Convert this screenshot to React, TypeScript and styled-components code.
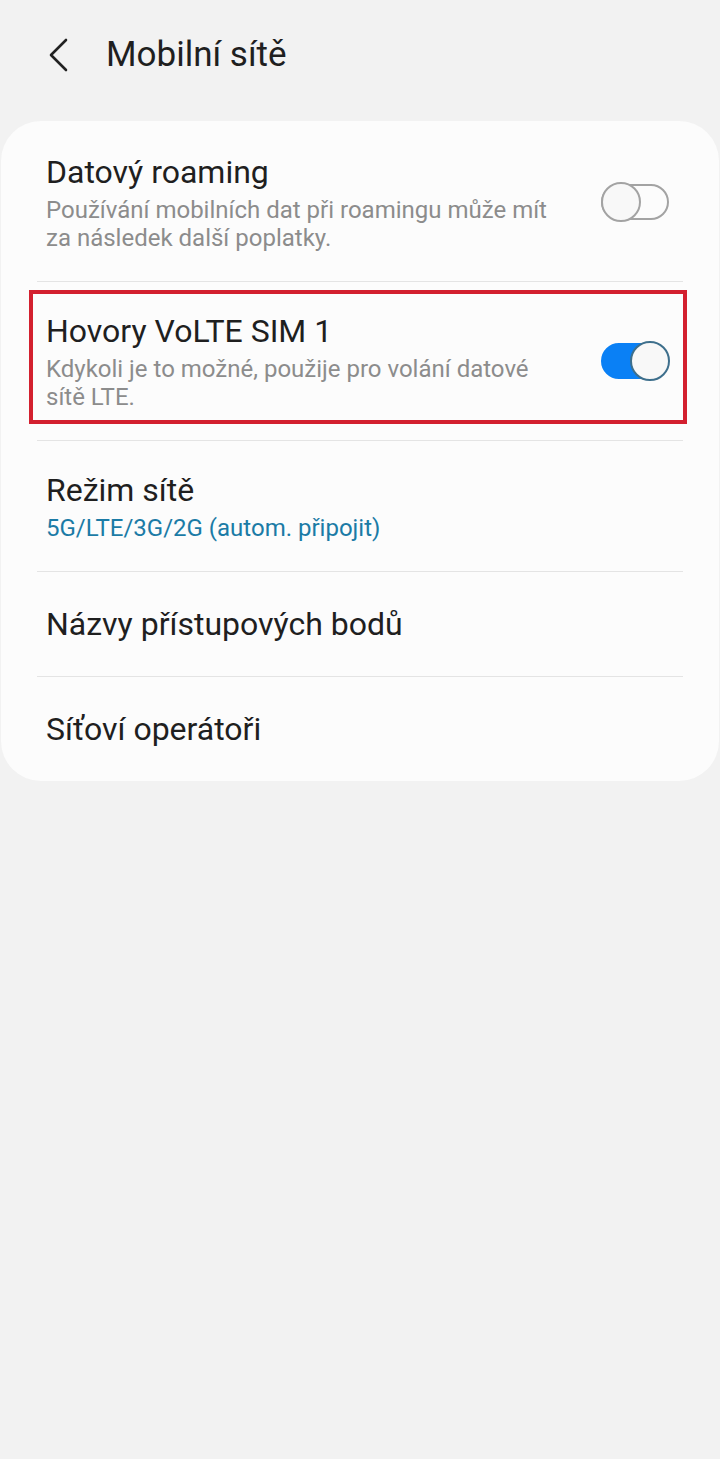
import React from 'react';
import styled, {createGlobalStyle} from 'styled-components';

const GlobalStyle = createGlobalStyle`
  html, body {
    margin: 0;
    padding: 0;
    background: #f2f2f2;
    font-family: Roboto, "Noto Sans", "Liberation Sans", sans-serif;
    -webkit-font-smoothing: antialiased;
  }
`;

const Screen = styled.div`
  min-height: 1459px;
  background: #f2f2f2;
`;

const Header = styled.header`
  height: 121px;
  display: flex;
  align-items: flex-start;
  padding: 33px 0 0 46px;
  box-sizing: border-box;
  gap: 36px;
`;

const BackButton = styled.button`
  border: 0;
  background: none;
  padding: 0;
  width: 24px;
  height: 44px;
  display: flex;
  align-items: center;
  justify-content: center;
  color: #222;
`;

const Title = styled.h1`
  margin: 0;
  font-size: 35px;
  line-height: 44px;
  font-weight: 400;
  color: #1f1f1f;
`;

const Card = styled.section`
  background: #fcfcfc;
  border-radius: 40px;
  margin: 0 1px;
  padding: 2px 36px 0;
`;

const Row = styled.div<{$summary?: boolean}>`
  position: relative;
  display: flex;
  align-items: center;
  padding: ${p => (p.$summary ? '29px' : '32px')} 14px ${p => (p.$summary ? '29px' : '32px')} 9px;
  & + & {
    border-top: 1px solid #e4e4e4;
  }
`;

const Texts = styled.div`
  flex: 1;
  min-width: 0;
  padding-right: 30px;
`;

const RowTitle = styled.div`
  font-size: 32px;
  line-height: 40px;
  color: #1f1f1f;
`;

const Summary = styled.div<{$accent?: boolean}>`
  max-width: 508px;
  margin-top: 4px;
  font-size: 24px;
  line-height: 28px;
  color: ${p => (p.$accent ? '#1b7ba6' : '#8c8c8c')};
`;

const Highlight = styled.div`
  position: absolute;
  left: -8px;
  right: -4px;
  top: 8px;
  bottom: 16px;
  border: 4px solid #d3202f;
  pointer-events: none;
`;

const Track = styled.div<{$on: boolean}>`
  position: relative;
  width: 68px;
  height: 36px;
  box-sizing: border-box;
  border-radius: 18px;
  flex-shrink: 0;
  background: ${p => (p.$on ? '#0a80f5' : 'transparent')};
  border: 2px solid ${p => (p.$on ? '#0a80f5' : '#a3a3a3')};
`;

const Knob = styled.div<{$on: boolean}>`
  position: absolute;
  top: -4px;
  ${p => (p.$on ? 'right: -3px;' : 'left: -2px;')}
  width: 40px;
  height: 40px;
  box-sizing: border-box;
  border-radius: 50%;
  background: #f8f8f8;
  border: 2px solid ${p => (p.$on ? '#3e6f8c' : '#a3a3a3')};
`;

function Toggle({on}: {on: boolean}) {
    return (
        <Track $on={on}>
            <Knob $on={on}/>
        </Track>
    );
}

type Item = {
    title: string;
    summary?: string;
    accent?: boolean;
    toggle?: boolean;
    highlight?: boolean;
};

const items: Item[] = [
    {title: 'Datový roaming', summary: 'Používání mobilních dat při roamingu může mít za následek další poplatky.', toggle: false},
    {title: 'Hovory VoLTE SIM 1', summary: 'Kdykoli je to možné, použije pro volání datové sítě LTE.', toggle: true, highlight: true},
    {title: 'Režim sítě', summary: '5G/LTE/3G/2G (autom. připojit)', accent: true},
    {title: 'Názvy přístupových bodů'},
    {title: 'Síťoví operátoři'},
];

export default function App() {
    return (
        <Screen>
            <GlobalStyle/>
            <Header>
                <BackButton aria-label="Zpět">
                    <svg width="22" height="34" viewBox="0 0 22 34" fill="none">
                        <path d="M19 2 L4 17 L19 32" stroke="#222" strokeWidth="2.6" strokeLinecap="round" strokeLinejoin="round"/>
                    </svg>
                </BackButton>
                <Title>Mobilní sítě</Title>
            </Header>
            <Card>
                {items.map(item => (
                    <Row key={item.title} $summary={!!item.summary}>
                        <Texts>
                            <RowTitle>{item.title}</RowTitle>
                            {item.summary && <Summary $accent={item.accent}>{item.summary}</Summary>}
                        </Texts>
                        {item.toggle !== undefined && <Toggle on={item.toggle}/>}
                        {item.highlight && <Highlight/>}
                    </Row>
                ))}
            </Card>
        </Screen>
    );
}
